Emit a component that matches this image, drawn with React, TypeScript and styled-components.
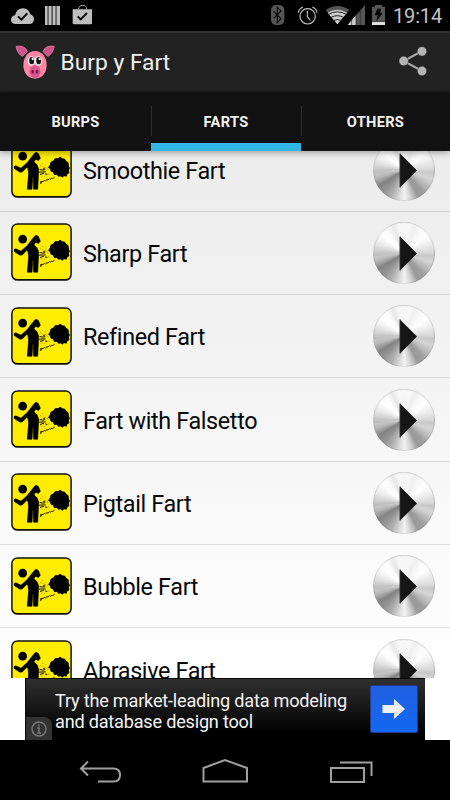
import React from 'react';
import styled, { createGlobalStyle } from 'styled-components';

const Global = createGlobalStyle`
  * { box-sizing: border-box; }
  body { margin: 0; background: #000; font-family: Roboto, "Noto Sans", sans-serif; }
  svg { display: block; flex: none; }
`;

const Screen = styled.div`
  width: 450px;
  height: 800px;
  overflow: hidden;
  display: flex;
  flex-direction: column;
  background: #000;
`;

const StatusBar = styled.header`
  height: 31px;
  flex: none;
  display: flex;
  justify-content: space-between;
  background: #000;
`;

const StatusRight = styled.div`
  display: flex;
`;

const Clock = styled.span`
  width: 57px;
  font-size: 20px;
  line-height: 33px;
  letter-spacing: -0.15px;
  color: #c4c4c4;
`;

const ActionBar = styled.div`
  height: 62px;
  flex: none;
  display: flex;
  align-items: center;
  background: #222;
  border-top: 2px solid #333;
  border-bottom: 2px solid #1a1a1a;
  padding: 0 20px 0 15px;
`;

const Title = styled.h1`
  flex: 1;
  margin: 1px 0 0 5.5px;
  font-size: 22.8px;
  font-weight: 400;
  line-height: 29px;
  color: #f0f0f0;
`;

const Tabs = styled.nav`
  height: 58px;
  flex: none;
  display: grid;
  grid-template-columns: 151px 150px 149px;
  background: #111;
  position: relative;
  box-shadow: 0 1px 7px rgba(0, 0, 0, 0.4);
  z-index: 1;
`;

const Tab = styled.div<{ $active?: boolean; $divided?: boolean }>`
  display: flex;
  align-items: center;
  justify-content: center;
  font-size: 14.6px;
  font-weight: 700;
  letter-spacing: 0.3px;
  color: #f2f2f2;
  border-top: 8px solid transparent;
  border-bottom: 8px solid ${(p) => (p.$active ? '#33b5e5' : '#111')};
  background: ${(p) =>
    p.$divided ? 'linear-gradient(#303030, #303030) 0 5px / 1px 30px no-repeat' : 'none'};
`;

const ListViewport = styled.main`
  height: 527px;
  flex: none;
  overflow: hidden;
  background: linear-gradient(#ececec, #fdfdfd 92%, #fff);
`;

const List = styled.ul`
  list-style: none;
  margin: -22.6px 0 0;
  padding: 0;
`;

const Row = styled.li`
  height: 83.333px;
  display: flex;
  align-items: center;
  padding: 0 15.5px 0 11px;
  border-bottom: 1px solid rgba(0, 0, 0, 0.12);
`;

const SignIcon = styled.svg`
  width: 61px;
  height: 58px;
  margin-bottom: 1.4px;
`;

const Label = styled.span`
  flex: 1;
  margin-left: 11px;
  padding-top: 2px;
  font-size: 23.4px;
  line-height: 30px;
  letter-spacing: -0.36px;
  color: #080808;
`;

const PlayButton = styled.button`
  width: 62px;
  height: 62px;
  padding: 0;
  border: 1px solid rgba(100, 100, 100, 0.2);
  border-radius: 50%;
  background:
    linear-gradient(rgba(255, 255, 255, 0.5), rgba(255, 255, 255, 0.25) 48%, rgba(70, 70, 70, 0.08) 54%, rgba(90, 90, 90, 0.02)),
    conic-gradient(#eee 0deg, #f2f2f2 12deg, #e2e2e2 22deg, #f6f6f6 38deg, #fff 52deg, #e8e8e8 68deg, #cfcfcf 86deg, #d5d5d5 98deg, #e0e0e0 108deg, #c5c5c5 122deg, #a2a2a2 138deg, #9c9c9c 152deg, #d2d2d2 165deg, #f8f8f8 179deg, #ddd 190deg, #b5b5b5 205deg, #989898 222deg, #868686 238deg, #c0c0c0 254deg, #cfcfcf 262deg, #b7b7b7 272deg, #e2e2e2 292deg, #fff 310deg, #f8f8f8 324deg, #d5d5d5 337deg, #f2f2f2 349deg, #eee 360deg);
`;

const AdStrip = styled.section`
  height: 62px;
  flex: none;
  display: flex;
  justify-content: center;
  background: #fff;
`;

const Ad = styled.div`
  width: 400px;
  display: flex;
  background: linear-gradient(#303030, #000 88%);
  border-top: 1px solid #080808;
  border-left: 1px solid #080808;
`;

const InfoBadge = styled.div`
  width: 26px;
  height: 23px;
  align-self: flex-end;
  display: grid;
  place-items: center;
  background: #333;
  border-top-right-radius: 8px;
`;

const AdText = styled.p`
  flex: 1;
  margin: 11px 0 0 3px;
  font-size: 18.1px;
  line-height: 21px;
  letter-spacing: -0.2px;
  color: #f5f5f5;
  white-space: nowrap;
`;

const AdAction = styled.button`
  width: 48px;
  height: 48px;
  margin: 6px 7px 0 0;
  padding: 0;
  display: grid;
  place-items: center;
  border: 1px solid #253a8c;
  border-radius: 2px;
  background: linear-gradient(#2060e0, #1268f3);
`;

const NavBar = styled.footer`
  height: 60px;
  flex: none;
  background: #000;
`;

const Notifications = () => (
  <svg width="100" height="31" viewBox="0 0 300 93" fill="#bebebe">
    <path d="M47 72a13 13 0 0 1-2-26q5-21 24-21 17 0 22 18 11 4 11 15 0 14-15 14z" />
    <path d="M54 49l10 10 18-19" fill="none" stroke="#000" strokeWidth="6" />
    <path d="M135 18h8v57h-8zM147 18h8v57h-8zM158 18h9v57h-9zM171 18h9v57h-9z" />
    <path d="M143 18h4v57h-4zM155 18h3v57h-3zM167 18h4v57h-4z" fill="#666" />
    <path d="M218 28h58v41q0 4-4 4h-50q-4 0-4-4z" />
    <path d="M236 28q0-12 12-12t12 12" fill="none" stroke="#aaa" strokeWidth="3" />
    <path d="M233 49l9 9 19-19" fill="none" stroke="#111" strokeWidth="6" />
  </svg>
);

const SystemIcons = () => (
  <svg width="128" height="31" viewBox="120 0 384 93">
    <rect x="138" y="15" width="40" height="60" rx="15" fill="#555" />
    <path d="M146 34l22 22-11 12V22l11 11-22 22" fill="none" stroke="#080808" strokeWidth="3.5" />
    <g fill="none" stroke="#c0c0c0" strokeWidth="3.5">
      <circle cx="248" cy="49" r="23" />
      <path d="M247 33v17l9 11" />
      <path d="M220 38q2-12 14-17M276 38q-2-12-14-17" />
    </g>
    <path d="M337 73L302 30q35-24 71 0z" fill="#555" />
    <path d="M337 73L308 38q29-17 58 0z" fill="#ccc" />
    <path d="M309 44q28-17 57 0M317 53q20-12 40 0M325 62q12-7 25 0" fill="none" stroke="#222" strokeWidth="3" />
    <path d="M368 75l52-60v60z" fill="#555" />
    <path d="M368 75l25-29v29z" fill="#d0d0d0" />
    <path d="M380 58v17M393 40v35M406 25v50" stroke="#222" strokeWidth="2" />
    <path d="M441 20h9v-5h21v5h9v45h-39z" fill="#555" />
    <path d="M457 26h12l-4 13h8l-19 25 4-18h-9z" fill="#000" />
    <path d="M441 66h39v9h-39z" fill="#ddd" />
  </svg>
);

const Pig = () => (
  <svg width="40" height="36" viewBox="46 130 120 108">
    <path d="M49 137q28-4 34 16l-14 14q-16-6-20-30zM164 137q-28-4-34 16l14 14q15-6 20-30z" fill="#cf528c" stroke="#e58bb2" strokeWidth="2" />
    <path d="M106 151c22 0 35 20 35 43s-14 40-35 40-35-17-35-40 13-43 35-43z" fill="#ff86a4" />
    <ellipse cx="95" cy="181" rx="11" ry="14" fill="#fff" />
    <ellipse cx="116" cy="181" rx="11" ry="14" fill="#fff" />
    <ellipse cx="96" cy="180" rx="7.500" ry="11" fill="#151515" />
    <ellipse cx="117" cy="180" rx="7.500" ry="11" fill="#151515" />
    <circle cx="99" cy="175" r="3.500" fill="#fff" />
    <circle cx="120" cy="175" r="3.500" fill="#fff" />
    <ellipse cx="106" cy="213" rx="17" ry="19" fill="#d9568e" />
    <ellipse cx="99" cy="213" rx="4" ry="6" fill="#79174a" />
    <ellipse cx="112" cy="213" rx="4" ry="6" fill="#79174a" />
  </svg>
);

const Share = () => (
  <svg width="34" height="34" viewBox="513 135 102 102">
    <path d="M591 153l-55 30 55 30" fill="none" stroke="#aaa" strokeWidth="6" />
    <g fill="#b4b4b4" stroke="#151515" strokeWidth="1">
      <circle cx="591" cy="154" r="14" />
      <circle cx="536" cy="183" r="14" />
      <circle cx="591" cy="213" r="14" />
    </g>
  </svg>
);

const Sign = () => (
  <SignIcon viewBox="9 20.500 183 174">
    <rect x="9.500" y="21" width="182" height="173" rx="19" fill="#111" />
    <rect x="14" y="25.500" width="173" height="163" rx="14" fill="#ffed00" />
    <circle cx="44" cy="69" r="13" />
    <path
      d="M18 101l5-3 16 7 19-17 22-28 4-3 7 4 6 14-6 7-8-4-5 8 9 9 5 13-1 22-2 38H77l-1-35h-2l-2 35H58l4-46-2-17-4-2-13 13-7 1-17-11z"
      stroke="#000"
      strokeWidth="2"
      strokeLinejoin="round"
    />
    <path
      d="M122 103l5-8 2-8 8-4 5-7 8 1 6-5 7 5 7 1 4 7 6 3 1 10 3 7-3 6 2 8-6 3-2 7-8-2-3 5-7-4-6 1-4-6-8 1-3-8-7-2-1-7z"
      strokeLinejoin="round"
      stroke="#000"
      strokeWidth="3"
    />
    <g fill="none" stroke="#111">
      <path d="M95 109l10 2 7-2M93 117l20-1M96 124l12-4M105 107l7-3M111 122l7 2" strokeWidth="3" />
      <path d="M97 97l3 2M104 101l2-1M112 95l2 1M116 105l3-1M121 122l3 1M109 129h2M118 109h3M100 130l3-1M103 92l2-2" stroke="#5c5600" strokeWidth="2" />
      <path d="M97 151l4-7 4 2 4-5 3 3 5-5 3 2 5-5 2 2 5-3 2 1 6-4M97 145l3 2-2 5" strokeWidth="2.800" />
    </g>
  </SignIcon>
);

const PlayArrow = () => (
  <svg width="60" height="60" viewBox="0 0 60 60">
    <path d="M26 13.500v34L43 30.500z" fill="#151515" />
    <path d="M26 13.500v34" stroke="#333" strokeWidth="1" />
  </svg>
);

const NavIcons = () => (
  <svg width="450" height="60" viewBox="0 0 450 60" fill="none" stroke="#a0a0a0" strokeWidth="2">
    <path d="M88 21.500l-7 7 7 7M81 28.500h32.500q6.500 0 6.500 6.500t-6.500 6.500H98" />
    <path d="M203.500 41.500v-13.500l21.500-8 22 8v13.500z" />
    <path d="M331 28h33v14h-33z" />
    <path d="M340 22.500h31.500V36" />
  </svg>
);

const sounds = [
  'Smoothie Fart',
  'Sharp Fart',
  'Refined Fart',
  'Fart with Falsetto',
  'Pigtail Fart',
  'Bubble Fart',
  'Abrasive Fart',
];

export default function App() {
  return (
    <Screen>
      <Global />
      <StatusBar>
        <Notifications />
        <StatusRight>
          <SystemIcons />
          <Clock>19:14</Clock>
        </StatusRight>
      </StatusBar>
      <ActionBar>
        <Pig />
        <Title>Burp y Fart</Title>
        <Share />
      </ActionBar>
      <Tabs>
        <Tab>BURPS</Tab>
        <Tab $active $divided>FARTS</Tab>
        <Tab $divided>OTHERS</Tab>
      </Tabs>
      <ListViewport>
        <List>
          {sounds.map((name) => (
            <Row key={name}>
              <Sign />
              <Label>{name}</Label>
              <PlayButton aria-label={`Play ${name}`}>
                <PlayArrow />
              </PlayButton>
            </Row>
          ))}
        </List>
      </ListViewport>
      <AdStrip>
        <Ad>
          <InfoBadge>
            <svg width="16" height="16" viewBox="0 0 16 16" fill="none" stroke="#777" strokeWidth="1.500">
              <circle cx="8" cy="8" r="7" />
              <path d="M8 3.500v2M6 7h2v5M6 12h4" />
            </svg>
          </InfoBadge>
          <AdText>
            Try the market-leading data modeling
            <br />
            and database design tool
          </AdText>
          <AdAction aria-label="Open">
            <svg width="24" height="20" viewBox="0 0 24 20">
              <path d="M0.500 6H12V0l11 10-11 10v-6H0.500z" fill="#f0f0f0" />
            </svg>
          </AdAction>
        </Ad>
      </AdStrip>
      <NavBar>
        <NavIcons />
      </NavBar>
    </Screen>
  );
}
